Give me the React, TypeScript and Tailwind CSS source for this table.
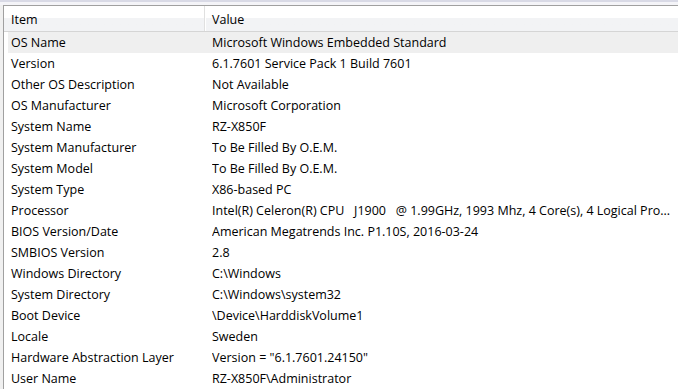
import React from 'react';

const rows: [string, string][] = [
    ['OS Name', 'Microsoft Windows Embedded Standard'],
    ['Version', '6.1.7601 Service Pack 1 Build 7601'],
    ['Other OS Description', 'Not Available'],
    ['OS Manufacturer', 'Microsoft Corporation'],
    ['System Name', 'RZ-X850F'],
    ['System Manufacturer', 'To Be Filled By O.E.M.'],
    ['System Model', 'To Be Filled By O.E.M.'],
    ['System Type', 'X86-based PC'],
    ['Processor', 'Intel(R) Celeron(R) CPU   J1900   @ 1.99GHz, 1993 Mhz, 4 Core(s), 4 Logical Pro...'],
    ['BIOS Version/Date', 'American Megatrends Inc. P1.10S, 2016-03-24'],
    ['SMBIOS Version', '2.8'],
    ['Windows Directory', 'C:\\Windows'],
    ['System Directory', 'C:\\Windows\\system32'],
    ['Boot Device', '\\Device\\HarddiskVolume1'],
    ['Locale', 'Sweden'],
    ['Hardware Abstraction Layer', 'Version = "6.1.7601.24150"'],
    ['User Name', 'RZ-X850F\\Administrator'],
];

export default function App() {
    return (
        <div className="w-[678px] h-[389px] overflow-hidden bg-[#f0f0f0] flex flex-col font-['Open_Sans',sans-serif] text-[12.5px] text-black">
            {/* window top strip */}
            <div className="h-[2px] bg-[#d9dae6] shrink-0" />
            <div className="h-[3px] bg-[#f4f4f8] shrink-0" />
            <div className="flex-1 flex min-h-0 pl-[3px]">
                <div className="flex-1 flex flex-col border-l border-t border-[#a0a0a0] bg-white min-w-0">
                    {/* Header */}
                    <div className="h-[26px] shrink-0 flex bg-gradient-to-b from-white from-50% to-[#f2f3f5] to-50% border-b border-[#d5d5d5]">
                        <div className="w-[201px] pl-[7px] pt-[4px] flex items-center border-r border-[#e0e0e0]">Item</div>
                        <div className="flex-1 pl-[6px] pt-[4px] flex items-center border-l border-white">Value</div>
                    </div>
                    {/* Rows */}
                    <div className="flex flex-col">
                        {rows.map(([item, value], i) => (
                            <div key={item} className="h-[21px] flex pl-[4px]">
                                <div className={`flex-1 flex items-center pt-[2px] min-w-0 ${i === 0 ? 'bg-[#efefef]' : ''}`}>
                                    <div className="w-[204px] pl-[3px] shrink-0 whitespace-nowrap overflow-hidden">{item}</div>
                                    <div className="flex-1 whitespace-pre overflow-hidden">{value}</div>
                                </div>
                            </div>
                        ))}
                    </div>
                </div>
            </div>
        </div>
    );
}
